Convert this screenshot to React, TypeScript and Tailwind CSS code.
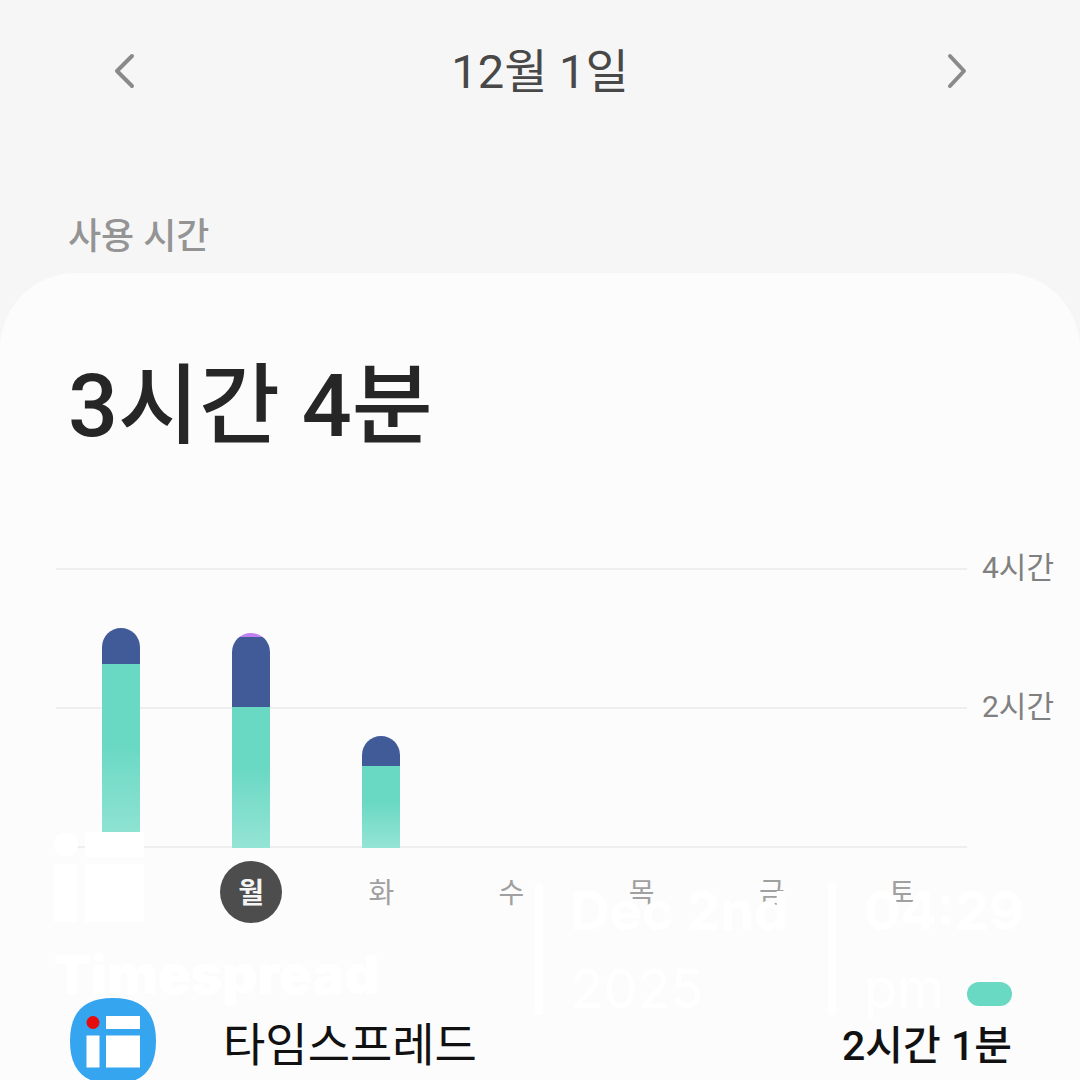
const usage = [
  { day: "일", segments: [{ color: "blue", minutes: 31 }, { color: "teal", minutes: 158 }] },
  {
    day: "월",
    selected: true,
    segments: [
      { color: "purple", minutes: 3 },
      { color: "blue", minutes: 60 },
      { color: "teal", minutes: 121 },
    ],
  },
  { day: "화", segments: [{ color: "blue", minutes: 26 }, { color: "teal", minutes: 70 }] },
  { day: "수", segments: [] },
  { day: "목", segments: [] },
  { day: "금", segments: [] },
  { day: "토", segments: [] },
];

const segmentClass: Record<string, string> = {
  purple: "bg-[#c080f0]",
  blue: "bg-[#415a98]",
  teal: "bg-linear-to-b from-[#6ad9c4] from-45% to-[#94e4d5]",
};

// Top of the chart is four hours
const MAX_MINUTES = 240;

const Chevron = ({ d }: { d: string }) => (
  <svg viewBox="0 0 40 40" className="h-10 w-10" fill="none" stroke="#8a8a8a" strokeWidth="4" strokeLinecap="round" strokeLinejoin="round">
    <path d={d} />
  </svg>
);

const AppIcon = () => (
  <svg viewBox="0 0 86 86" className="h-[86px] w-[86px] shrink-0" aria-hidden>
    <path d="M43 0C72 0 86 14 86 43S72 86 43 86 0 72 0 43 14 0 43 0Z" fill="#35a5ef" />
    <circle cx="23" cy="24.500" r="6.500" fill="#e60c0c" />
    <path d="M36 18h34v13H36zM16.500 37.500h13v32h-13zM36 37.500h34v32H36z" fill="#fff" />
  </svg>
);

const DateNav = () => (
  <header className="flex items-center justify-between px-[103px] pt-9">
    <button type="button" aria-label="이전 날짜">
      <Chevron d="M29 4 14 19 29 34" />
    </button>
    <h1 className="text-[47px] leading-[72px] text-[#484848]">12월 1일</h1>
    <button type="button" aria-label="다음 날짜">
      <Chevron d="M13 4 27 19 13 34" />
    </button>
  </header>
);

const UsageChart = () => (
  <div className="mt-[98px] flex pl-14">
    <div className="min-w-0 flex-1">
      <div className="grid h-[280px]">
        <div className="col-start-1 row-start-1 flex flex-col justify-between">
          <div className="h-0.5 bg-[#eeeeee]" />
          <div className="h-0.5 bg-[#eeeeee]" />
          <div className="h-0.5 bg-[#eeeeee]" />
        </div>
        <div className="z-10 col-start-1 row-start-1 grid grid-cols-7 justify-items-center">
          {usage.map(({ day, segments }) => (
            <div key={day} className="flex h-full w-[38px] flex-col justify-end">
              <div
                className="flex flex-col overflow-hidden rounded-t-full"
                style={{ height: `${(segments.reduce((sum, s) => sum + s.minutes, 0) / MAX_MINUTES) * 100}%` }}
              >
                {segments.map((s) => (
                  <div key={s.color} className={segmentClass[s.color]} style={{ flex: `${s.minutes} 0 0` }} />
                ))}
              </div>
            </div>
          ))}
        </div>
      </div>
      <ol className="mt-[13px] grid grid-cols-7 justify-items-center leading-[44px]">
        {usage.map(({ day, selected }) => (
          <li
            key={day}
            className={
              selected
                ? "flex size-[62px] items-center justify-center rounded-full bg-[#4d4d4d] pt-1 text-[28px] font-bold text-[#f4f4f4]"
                : "flex size-[62px] items-center justify-center pt-1 text-[28px] text-[#a0a0a0]"
            }
          >
            {day}
          </li>
        ))}
      </ol>
    </div>
    <div className="-mt-5 w-[113px] pl-[15px] text-[30px] leading-10 text-[#808080]">
      <div>4시간</div>
      <div className="mt-[99px]">2시간</div>
    </div>
  </div>
);

const AppRow = () => (
  <div className="mt-[59px] flex items-start pr-[68px] pl-[70px]">
    <div className="mt-4">
      <AppIcon />
    </div>
    <span className="mt-[30px] ml-[67px] text-[46px] leading-[66px] text-[#111111]">타임스프레드</span>
    <div className="ml-auto flex flex-col items-end">
      <div className="h-6 w-[45px] rounded-full bg-[#6ad9c4]" />
      <span className="mt-2.5 text-[41px] leading-[60px] font-medium text-[#111111]">2시간 1분</span>
    </div>
  </div>
);

// White stamp that floats over the page
const TimeStamp = () => (
  <div className="pointer-events-none absolute inset-x-0 bottom-0 z-20 flex items-end justify-between pr-14 pb-[65px] pl-[54px] font-[Inter,'Noto_Sans_CJK_KR',sans-serif] text-white">
    <div>
      <svg viewBox="0 0 90 90" className="h-[90px] w-[90px]" aria-hidden>
        <circle cx="12" cy="12.500" r="12" fill="currentColor" />
        <path d="M31 0h59v25H31zM0 32h24v58H0zM31 32h59v58H31z" fill="currentColor" />
      </svg>
      <div className="mt-[17px] mb-1 text-[54px] leading-[72px] font-black">Timespread</div>
    </div>
    <div className="flex">
      <div className="w-2 rounded-full bg-white" />
      <div className="ml-7 text-[54px] leading-[78px]">
        <div className="-mt-[11px] font-bold">Dec 2nd</div>
        <div className="-mb-[13px]">2025</div>
      </div>
      <div className="ml-10 w-2 rounded-full bg-white" />
      <div className="ml-7 text-[54px] leading-[78px]">
        <div className="-mt-[11px] font-bold">04:29</div>
        <div className="-mb-[13px]">pm</div>
      </div>
    </div>
  </div>
);

export default function App() {
  return (
    <div className="relative flex h-screen flex-col overflow-hidden bg-[#f6f6f6] font-[Roboto,'Noto_Sans_CJK_KR',sans-serif]">
      <DateNav />
      <h2 className="mt-[102px] px-[68px] text-[36px] leading-[54px] font-medium text-[#949494]">사용 시간</h2>
      <main className="mt-[9px] grow rounded-t-[76px] bg-[#fcfcfc] pt-[68px]">
        <p className="px-[68px] text-[88px] leading-[129px] font-medium text-[#262626]">3시간 4분</p>
        <UsageChart />
        <AppRow />
      </main>
      <TimeStamp />
    </div>
  );
}
